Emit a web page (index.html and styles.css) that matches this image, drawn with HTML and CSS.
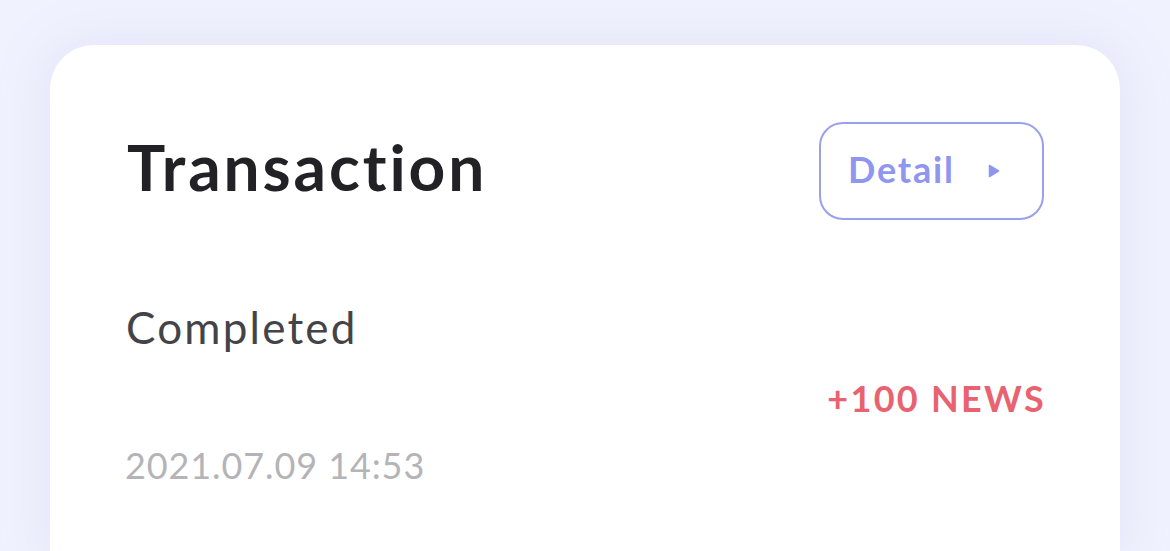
FILE: index.html
```html
<!DOCTYPE html>
<html>
<head>
<meta charset="utf-8">
<link rel="stylesheet" href="styles.css">
</head>
<body>
<div class="page">
  <div class="card">
    <div class="head">
      <h1 class="title">Transaction</h1>
      <button class="detail">
        <span>Detail</span>
        <svg class="arrow" width="12" height="14" viewBox="0 0 12 14"><path d="M1.5 1.5 L10.5 7 L1.5 12.5 Z" fill="#8f96ef" stroke="#8f96ef" stroke-width="1.5" stroke-linejoin="round"/></svg>
      </button>
    </div>
    <div class="body">
      <div class="info">
        <div class="status">Completed</div>
        <div class="date">2021.07.09 14:53</div>
      </div>
      <div class="amount">+100 NEWS</div>
    </div>
  </div>
</div>
</body>
</html>
```
FILE: styles.css
```css
html, body {
  margin: 0;
  padding: 0;
}
body {
  width: 1170px;
  height: 551px;
  overflow: hidden;
  background: #f0f3fe;
  font-family: "Lato", "Inter", sans-serif;
}
.page {
  padding: 45px 50px 0 50px;
}
.card {
  background: #ffffff;
  border-radius: 44px 44px 0 0;
  height: 506px;
  box-shadow: 0 0 50px 12px #e5e6f8;
  padding: 77px 76px 0 77px;
  box-sizing: border-box;
}
.head {
  display: flex;
  justify-content: space-between;
  align-items: center;
}
.title {
  margin: 0 0 8px 0;
  font-size: 64px;
  font-weight: 700;
  color: #222226;
  line-height: 90px;
  letter-spacing: 2.9px;
}
.detail {
  width: 225px;
  height: 98px;
  border: 2px solid #9aa0ee;
  border-radius: 24px;
  background: #fff;
  display: flex;
  align-items: center;
  padding: 0 0 5px 27px;
  box-sizing: border-box;
  font-family: inherit;
  font-size: 36px;
  font-weight: 700;
  color: #8f96ef;
  letter-spacing: 1.8px;
  gap: 33px;
}
.arrow {
  display: block;
  margin-top: 4px;
}
.body {
  display: flex;
  justify-content: space-between;
  align-items: center;
  margin-top: 82px;
}
.status {
  font-size: 44px;
  color: #444448;
  line-height: 50px;
  letter-spacing: 2.2px;
  margin-left: -1px;
}
.date {
  margin-top: 92px;
  font-size: 36px;
  color: #b4b4b8;
  line-height: 42px;
  letter-spacing: 0.9px;
  margin-left: -2px;
}
.amount {
  font-size: 36px;
  font-weight: 700;
  color: #e8636f;
  letter-spacing: 2.3px;
  margin-top: 8px;
  margin-right: -2px;
}
```
